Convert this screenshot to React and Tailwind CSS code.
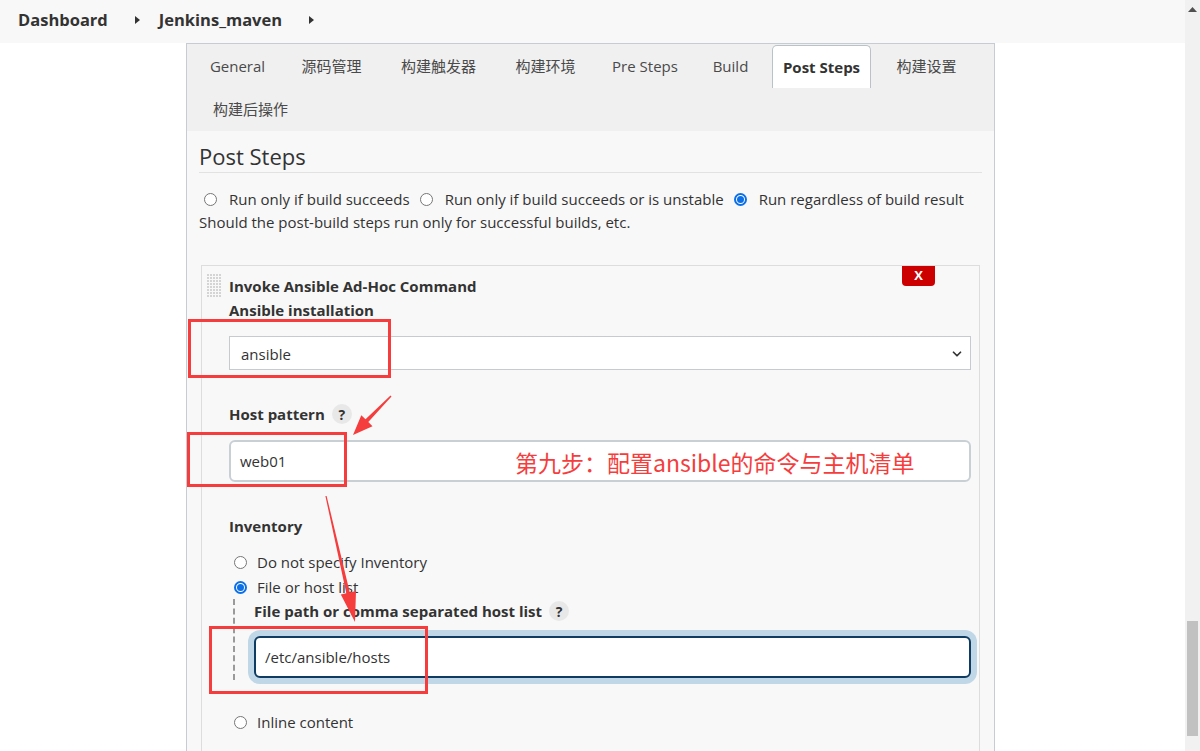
import React from 'react';
import { ChevronDown } from 'lucide-react';

const tabs = [
    { label: 'General', width: 'w-[77px]' },
    { label: '源码管理', width: 'w-[87px]' },
    { label: '构建触发器', width: 'w-[103px]' },
    { label: '构建环境', width: 'w-[87px]' },
    { label: 'Pre Steps', width: 'w-[88px]' },
    { label: 'Build', width: 'w-[59px]' },
    { label: 'Post Steps', width: 'w-[99px]', active: true },
    { label: '构建设置', width: 'w-[87px]' },
    { label: '构建后操作', width: 'w-[103px]' },
];

const Radio = ({ checked }) =>
    checked ? (
        <span className="flex h-[13px] w-[13px] shrink-0 items-center justify-center rounded-full border-2 border-[#0b6fe8] bg-white">
            <span className="block h-[7px] w-[7px] rounded-full bg-[#0b6fe8]" />
        </span>
    ) : (
        <span className="block h-[13px] w-[13px] shrink-0 rounded-full border border-[#767676] bg-white" />
    );

const Help = () => (
    <span className="ml-[7px] flex h-[20px] w-[20px] items-center justify-center rounded-full bg-[#e8e8e8] text-[14px] font-bold text-[#333]">?</span>
);

const Crumb = () => (
    <svg width="5" height="8" viewBox="0 0 5 8" className="block shrink-0">
        <polygon points="0,0 5,4 0,8" fill="#333" />
    </svg>
);

const DragHandle = () => (
    <svg width="14" height="24" viewBox="0 0 14 24" className="absolute left-[5px] top-[8px]">
        <defs>
            <pattern id="dots" width="3" height="3" patternUnits="userSpaceOnUse">
                <rect width="2" height="2" fill="#d4d4d4" />
            </pattern>
        </defs>
        <rect width="14" height="24" fill="url(#dots)" />
    </svg>
);

export default function App() {
    return (
        <div className="relative flex h-[751px] w-[1200px] overflow-hidden bg-white font-[family-name:'Open_Sans','Noto_Sans_CJK_SC',sans-serif] text-[15px] text-[#333]">
            <div className="flex flex-1 flex-col">
                {/* breadcrumb bar */}
                <div className="flex h-[43px] shrink-0 items-center bg-[#f8f8f8] pb-[3px] pl-[18px]">
                    <span className="text-[16.5px] font-bold">Dashboard</span>
                    <span className="ml-[27px]"><Crumb /></span>
                    <span className="ml-[19px] text-[16.5px] font-bold">Jenkins_maven</span>
                    <span className="ml-[27px]"><Crumb /></span>
                </div>

                <div className="flex-1 pl-[186px]">
                    <div className="h-full w-[809px] border-x border-t border-[#c5ccd2] bg-[#f8f8f8]">
                        {/* tabs */}
                        <div className="flex flex-wrap gap-x-[12px] bg-[#f0f0f0] pl-[12px] pt-[1px]">
                            {tabs.map((t) =>
                                t.active ? (
                                    <div
                                        key={t.label}
                                        className={`${t.width} flex h-[43px] items-center justify-center rounded-t-[5px] border-x border-t border-[#b8c2c8] bg-white font-bold text-[#333]`}
                                    >
                                        {t.label}
                                    </div>
                                ) : (
                                    <div key={t.label} className={`${t.width} flex h-[43px] items-center justify-center text-[#4a4a4a]`}>
                                        {t.label}
                                    </div>
                                )
                            )}
                        </div>

                        <div className="px-[12px]">
                            <h2 className="mt-[9px] border-b border-[#e2e2e2] text-[22px] leading-[32px] font-normal">Post Steps</h2>

                            <div className="mt-[14px] flex h-[24px] items-center pl-[5px]">
                                <Radio />
                                <span className="ml-[12px]">Run only if build succeeds</span>
                                <span className="ml-[10px]"><Radio /></span>
                                <span className="ml-[12px]">Run only if build succeeds or is unstable</span>
                                <span className="ml-[10px]"><Radio checked /></span>
                                <span className="ml-[12px]">Run regardless of build result</span>
                            </div>
                            <div className="h-[22px] leading-[22px]">Should the post-build steps run only for successful builds, etc.</div>

                            {/* build step */}
                            <div className="relative ml-[2px] mt-[32px] w-[779px] border-x border-t border-[#dddddd] pb-[20px] pl-[27px] pr-[8px] pt-[8px]">
                                <DragHandle />
                                <div className="absolute right-[44px] top-0 flex h-[20px] w-[33px] items-center justify-center rounded-b-[4px] bg-[#cc0000] text-[13px] font-bold text-white">
                                    X
                                </div>

                                <div className="h-[24px] font-bold leading-[24px]">Invoke Ansible Ad-Hoc Command</div>
                                <div className="h-[24px] font-bold leading-[24px]">Ansible installation</div>
                                <div className="mt-[14px] flex h-[34px] items-center justify-between border border-[#c5cbcf] bg-white pl-[11px] pr-[6px] pt-[2px]">
                                    <span>ansible</span>
                                    <ChevronDown size={14} strokeWidth={3} className="text-[#333]" />
                                </div>

                                <div className="mt-[32px] flex h-[24px] items-center">
                                    <span className="font-bold">Host pattern</span>
                                    <Help />
                                </div>
                                <div className="mt-[14px] flex h-[42px] items-center rounded-[6px] border-2 border-[#c8d0d5] bg-white pl-[9px]">
                                    web01
                                </div>

                                <div className="mt-[32px] h-[24px] font-bold leading-[24px]">Inventory</div>
                                <div className="mt-[12px] flex h-[24px] items-center gap-[10px] pl-[5px]">
                                    <Radio />
                                    <span>Do not specify Inventory</span>
                                </div>
                                <div className="mt-[1px] flex h-[24px] items-center gap-[10px] pl-[5px]">
                                    <Radio checked />
                                    <span>File or host list</span>
                                </div>
                                <div className="ml-[4px] border-l-2 border-dashed border-[#9a9a9a] pb-[2px] pl-[19px]">
                                    <div className="flex h-[24px] items-center">
                                        <span className="font-bold">File path or comma separated host list</span>
                                        <Help />
                                    </div>
                                    <div className="mt-[13px] flex h-[42px] items-center rounded-[6px] border-2 border-[#103c61] bg-white pl-[9px] ring-[6px] ring-[#c0d7e7]">
                                        /etc/ansible/hosts
                                    </div>
                                </div>
                                <div className="mt-[30px] flex h-[24px] items-center gap-[10px] pl-[5px]">
                                    <Radio />
                                    <span>Inline content</span>
                                </div>
                            </div>
                        </div>
                    </div>
                </div>
            </div>

            {/* scrollbar */}
            <div className="flex w-[15px] shrink-0 flex-col items-center bg-[#f1f1f1]">
                <svg width="9" height="5" viewBox="0 0 9 5" className="mt-[7px]">
                    <polygon points="4.5,0 9,5 0,5" fill="#505050" />
                </svg>
                <div className="mt-[609px] h-[115px] w-[11px] bg-[#c1c1c1]" />
            </div>

            {/* annotation overlay */}
            <div className="pointer-events-none absolute inset-0">
                <div className="absolute left-[188px] top-[319px] h-[59px] w-[203px] border-[3px] border-[#f53d3d]" />
                <div className="absolute left-[187px] top-[432px] h-[55px] w-[160px] border-[3px] border-[#f53d3d]" />
                <div className="absolute left-[209px] top-[626px] h-[68px] w-[219px] border-[3px] border-[#f53d3d]" />
                <svg width="1200" height="751" viewBox="0 0 1200 751" className="absolute left-0 top-0">
                    <polygon
                        points="391.5,396.5 368.3,422.1 372.5,426.2 353,435 361.3,415.2 365.5,419.3 390.5,395.5"
                        fill="#f53d3d"
                    />
                    <polygon
                        points="326.6,495.9 349.8,592.4 356,591 355,622 340.8,594.5 346.3,593.2 325.4,496.1"
                        fill="#f53d3d"
                    />
                </svg>
                <span className="absolute left-[515px] top-[447px] font-[family-name:'Noto_Sans_CJK_SC',sans-serif] text-[23px] leading-[30px] text-[#f53d3d]">
                    第九步：配置ansible的命令与主机清单
                </span>
            </div>
        </div>
    );
}
